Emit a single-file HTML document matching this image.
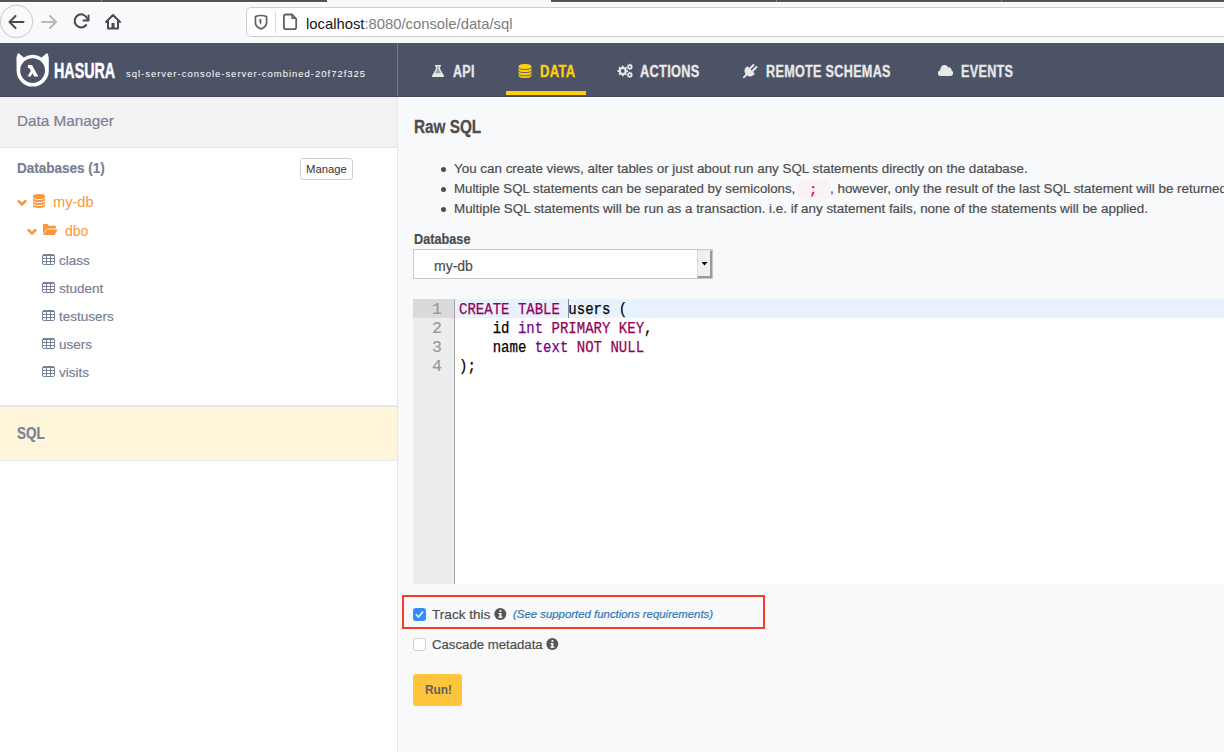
<!DOCTYPE html>
<html><head><meta charset="utf-8">
<style>
*{margin:0;padding:0;box-sizing:border-box}
html,body{width:1224px;height:752px;overflow:hidden;background:#f8f9fb;font-family:"Liberation Sans",sans-serif}
.a{position:absolute;white-space:nowrap}
.sx{transform-origin:0 0}
#tabs{left:0;top:0;width:1224px;height:2px;background:#5c4f55}
#tabgap{left:327px;top:0;width:224px;height:3px;background:#f9f9fb}
#toolbar{left:0;top:2px;width:1224px;height:41px;background:#f9f9fb;border-top:1px solid #fff}
#url{left:246px;top:7px;width:990px;height:30px;background:#fff;border:1px solid #cfcfd2;border-radius:5px}
#urltext{left:306px;top:15px;font-size:14.8px;color:#15141a;line-height:18px}
#urltext span{color:#7c7c7f}
#hdr{left:0;top:43px;width:1224px;height:54px;background:#4c5366;border-bottom:1px solid #424859}
#hsep{left:397px;top:43px;width:1px;height:53px;background:#737a8e}
.nav{top:62.5px;font-size:16px;font-weight:bold;color:#e8e8e8;-webkit-text-stroke:0.35px currentColor;letter-spacing:0.4px;line-height:18px;transform-origin:0 0}
#side{left:0;top:97px;width:398px;height:655px;background:#fff;border-right:1px solid #e6e6e6}
#dm{left:0;top:97px;width:397px;height:51px;background:#f2f2f2;border-bottom:1px solid #e3e3e3}
.st{color:#788095;-webkit-text-stroke:0.2px #788095}
.org{font-size:14px;color:#fd9539;line-height:18px}
.tbl{font-size:13.5px;color:#788095;line-height:18px;-webkit-text-stroke:0.2px #788095}
#sqlbox{left:0;top:405px;width:397px;height:56px;background:#fef5db;border-top:2px solid #e5e5e5;border-bottom:1px solid #e8e8e8}
.main{color:#4d4d4d;-webkit-text-stroke:0.2px #4d4d4d}
.bl{font-size:13.4px;line-height:16px}
.code{font-family:"Liberation Mono",monospace;font-size:12.6px;color:#c7254e;background:#f9f2f4;border-radius:4px;padding:2px 4px}
.gut{left:413px;width:29px;text-align:right;font-family:"Liberation Mono",monospace;font-size:16.5px;line-height:19px;color:#999;padding-top:1px;-webkit-text-stroke:0.2px #999}
.cd{left:459px;font-family:"Liberation Mono",monospace;font-size:16px;line-height:19px;color:#000;white-space:pre;transform-origin:0 0;transform:scaleX(0.876);padding-top:2px;-webkit-text-stroke:0.25px currentColor}
.cd b{font-weight:normal;color:#950055;-webkit-text-stroke:0.25px #950055}
.cd i{font-style:normal;color:#770088;-webkit-text-stroke:0.25px #770088}
.ck{font-size:13.6px;line-height:16px}
</style></head><body>
<div class="a" id="tabs"></div>
<div class="a" id="toolbar"></div>
<div class="a" id="tabgap"></div>
<div class="a" style="left:101px;top:0;width:1px;height:2px;background:#8d8287"></div>
<div class="a" style="left:776px;top:0;width:1px;height:2px;background:#8d8287"></div>
<div class="a" style="left:1001px;top:0;width:1px;height:2px;background:#8d8287"></div>
<!-- nav buttons -->
<svg class="a" style="left:0;top:0" width="240" height="43" viewBox="0 0 240 43">
  <circle cx="16.5" cy="21.5" r="16.3" fill="none" stroke="#c8c8c8" stroke-width="1"/>
  <path d="M23.5 22H9.5M15.5 16L9.5 22L15.5 28" fill="none" stroke="#4a4a4f" stroke-width="2" stroke-linecap="round" stroke-linejoin="round"/>
  <path d="M42 22H56M50 16L56 22L50 28" fill="none" stroke="#b9b9bc" stroke-width="2" stroke-linecap="round" stroke-linejoin="round"/>
  <path d="M87.5 19.5A6.5 6.5 0 1 0 86.2 25" fill="none" stroke="#4a4a4f" stroke-width="2" stroke-linecap="round"/>
  <path d="M88.5 15.5V20.5H83.5" fill="none" stroke="#4a4a4f" stroke-width="2" stroke-linecap="round" stroke-linejoin="round"/>
  <path d="M106 22L113 15L120 22M108 20.5V28.5H118V20.5" fill="none" stroke="#4a4a4f" stroke-width="2" stroke-linecap="round" stroke-linejoin="round"/>
  <rect x="111.5" y="23" width="3" height="5" fill="#4a4a4f"/>
</svg>
<div class="a" id="url"></div>
<svg class="a" style="left:250px;top:10px" width="60" height="26" viewBox="250 10 60 26">
  <path d="M261 15.5C263 15.5 265 15.9 266.6 16.6V22.5C266.6 25.8 264.2 27.8 261 28.9C257.8 27.8 255.4 25.8 255.4 22.5V16.6C257 15.9 259 15.5 261 15.5Z" fill="none" stroke="#606162" stroke-width="1.7" stroke-linejoin="round"/>
  <path d="M259.3 19.2L261.3 18.8V24.8C260.5 24.2 259.8 23.3 259.5 22.2Z" fill="#606162"/>
  <rect x="275" y="11" width="1" height="22" fill="#dcdcdc"/>
  <path d="M285.8 14.5H292L296.2 18.8V27.3A1.9 1.9 0 0 1 294.3 29.2H285.8A1.9 1.9 0 0 1 283.9 27.3V16.4A1.9 1.9 0 0 1 285.8 14.5Z" fill="none" stroke="#606162" stroke-width="1.8" stroke-linejoin="round"/>
  <path d="M292 14.8V18.3H295.9" fill="none" stroke="#606162" stroke-width="1.5" stroke-linejoin="round"/>
</svg>
<div class="a" id="urltext">localhost<span>:8080/console/data/sql</span></div>

<!-- hasura header -->
<div class="a" id="hdr"></div>
<div class="a" id="hsep"></div>
<svg class="a" style="left:0;top:43px" width="1224" height="53" viewBox="0 43 1224 53">
  <path d="M16.6 70.5L16.5 60C16.4 57 17 54.5 18.3 53L23.8 57.5A16.4 16.4 0 0 1 41.6 57.5L47 53C48.3 54.5 48.9 57 48.8 60L48.8 70.5A16.1 16.1 0 0 1 16.6 70.5Z" fill="#fff"/>
  <circle cx="32.6" cy="70.6" r="12.4" fill="#4c5366"/>
  <path d="M27.9 65H32L38.3 76.4H34.2L32.5 73.2L30.7 76.4H27.6L30.9 70.6L29.9 68.9C29.5 68.2 29 68 28.4 68H27.9Z" fill="#fff"/>
  <!-- flask -->
  <path d="M435 65H441V66.3H440.2V69.3L444 75.8C444.3 76.4 444 77 443.3 77H432.7C432 77 431.7 76.4 432 75.8L435.8 69.3V66.3H435Z" fill="#e8e8e8"/>
  <path d="M437.2 66.3V69.6L435 73.2H441L438.8 69.6V66.3Z" fill="#9da1ad"/>
  <!-- db yellow -->
  <path d="M518.6 66.3C518.6 63.3 531.4 63.3 531.4 66.3V75.8C531.4 78.8 518.6 78.8 518.6 75.8Z" fill="#fecf0e"/>
  <g fill="none" stroke="#4c5366" stroke-width="0.9">
    <path d="M518.4 67.6C520 70.2 530 70.2 531.6 67.6"/>
    <path d="M518.4 70.8C520 73.3 530 73.3 531.6 70.8"/>
    <path d="M518.4 73.9C520 76.4 530 76.4 531.6 73.9"/>
  </g>
  <!-- gears -->
  <g fill="#e8e8e8">
    <circle cx="622.7" cy="71" r="3.9"/>
    <g stroke="#e8e8e8" stroke-width="1.9">
      <path d="M622.7 65.8V76.2M617.5 71H627.9M619 67.3L626.4 74.7M626.4 67.3L619 74.7"/>
    </g>
    <circle cx="629.8" cy="66.9" r="2.3"/>
    <path d="M629.8 63.8V70M626.7 66.9H632.9M627.6 64.7L632 69.1M632 64.7L627.6 69.1" stroke="#e8e8e8" stroke-width="1.2"/>
    <circle cx="629.8" cy="74.9" r="2.3"/>
    <path d="M629.8 71.8V78M626.7 74.9H632.9M627.6 72.7L632 77.1M632 72.7L627.6 77.1" stroke="#e8e8e8" stroke-width="1.2"/>
  </g>
  <circle cx="622.7" cy="71" r="1.9" fill="#4c5366"/>
  <circle cx="629.8" cy="66.9" r="0.9" fill="#4c5366"/>
  <circle cx="629.8" cy="74.9" r="0.9" fill="#4c5366"/>
  <!-- plug -->
  <g fill="#e8e8e8" stroke="#e8e8e8">
    <path d="M747.5 66.5L754.5 73.5C753 76.5 749.5 77 747 75L745.8 73.8C744 71.5 744.5 68 747.5 66.5Z" stroke-width="0.5"/>
    <path d="M743.8 77.3L747 74" stroke-width="1.8" stroke-linecap="round"/>
    <path d="M750 68.5L753.5 65M752.5 71L756.5 67" stroke-width="2" stroke-linecap="round"/>
  </g>
  <!-- cloud -->
  <path d="M940.5 76C938.8 76 937.9 74.7 937.9 73.2C937.9 71.5 939 70.4 940.2 70.2C940.2 67 942 65 944.6 65C946.4 65 947.6 66 948.3 67.3C950.3 67 951.7 68.6 951.6 70.5C952.6 71 953.1 72 953.1 73.3C953.1 74.9 952 76 950.4 76Z" fill="#e8e8e8"/>
</svg>
<div class="a sx" style="left:54px;top:59px;font-size:22.5px;font-weight:bold;color:#fff;line-height:24px;transform:scaleX(0.635);-webkit-text-stroke:0.5px #fff">HASURA</div>
<div class="a" style="left:126px;top:66.5px;font-size:9.5px;color:#fff;letter-spacing:0.98px;line-height:14px">sql-server-console-server-combined-20f72f325</div>

<div class="a nav" style="left:453px;transform:scaleX(0.778)">API</div>
<div class="a nav" style="left:540px;color:#fecf0e;transform:scaleX(0.816)">DATA</div>
<div class="a" style="left:506px;top:91px;width:80px;height:4px;background:#fecf0e"></div>
<div class="a nav" style="left:640px;transform:scaleX(0.797)">ACTIONS</div>
<div class="a nav" style="left:766px;transform:scaleX(0.7875)">REMOTE SCHEMAS</div>
<div class="a nav" style="left:961px;transform:scaleX(0.7875)">EVENTS</div>
<div class="a" style="left:0;top:97px;width:1224px;height:1px;background:#fff"></div>

<!-- sidebar -->
<div class="a" id="side"></div>
<div class="a" id="dm"></div>
<div class="a st" style="left:17px;top:112px;font-size:15.3px;line-height:18px">Data Manager</div>
<div class="a st sx" style="left:17px;top:159px;font-size:15px;font-weight:bold;line-height:18px;transform:scaleX(0.9)">Databases (1)</div>
<div class="a" style="left:300px;top:158px;width:53px;height:22px;border:1px solid #cdcdcd;border-radius:3px;background:#fff"></div>
<div class="a" style="left:306px;top:162px;font-size:11.3px;color:#333;line-height:14px">Manage</div>

<svg class="a" style="left:0;top:190px" width="120" height="190" viewBox="0 190 120 190">
  <g fill="none" stroke="#fd9539" stroke-width="2.6" stroke-linecap="square" stroke-linejoin="miter">
    <path d="M18.8 201.3L22 204.5L25.2 201.3"/>
    <path d="M28.8 230.3L32 233.5L35.2 230.3"/>
  </g>
  <g fill="#fd9539">
    <path d="M33 196.2C33 193.3 45 193.3 45 196.2V205.8C45 208.7 33 208.7 33 205.8Z"/>
    <path d="M43 225.2C43 224.5 43.5 224 44.2 224H47.5L49 225.8H54.8C55.5 225.8 56 226.3 56 227V228.5H48.8C47.5 228.5 46.8 229 46.2 229.8L43 234.5Z"/>
    <path d="M47 229.5H57.8L54.5 235H43.2Z"/>
  </g>
  <g fill="none" stroke="#fff" stroke-width="0.9">
    <path d="M32.8 197.6C34.5 200.2 43.5 200.2 45.2 197.6"/>
    <path d="M32.8 200.7C34.5 203.2 43.5 203.2 45.2 200.7"/>
    <path d="M32.8 203.7C34.5 206.2 43.5 206.2 45.2 203.7"/>
  </g>
  <g id="ti" fill="none" stroke="#75809a" stroke-width="1">
    <rect x="42.5" y="254.5" width="12" height="10" rx="1.5"/>
    <path d="M43 255.5H54" stroke-width="1"/>
    <path d="M43 258.5H54M43 261.5H54M46.5 255V264M50.5 255V264"/>
  </g>
  <use href="#ti" y="28"/>
  <use href="#ti" y="56"/>
  <use href="#ti" y="84"/>
  <use href="#ti" y="112"/>
</svg>
<div class="a org" style="left:53px;top:193px;font-size:14.6px">my-db</div>
<div class="a org" style="left:65px;top:222px">dbo</div>

<div class="a tbl" style="left:59px;top:252px">class</div>
<div class="a tbl" style="left:59px;top:280px">student</div>
<div class="a tbl" style="left:59px;top:308px">testusers</div>
<div class="a tbl" style="left:59px;top:336px">users</div>
<div class="a tbl" style="left:59px;top:364px">visits</div>

<div class="a" id="sqlbox"></div>
<div class="a st sx" style="left:17px;top:425px;font-size:16px;font-weight:bold;line-height:18px;transform:scaleX(0.84)">SQL</div>

<!-- main -->
<div class="a main sx" style="left:414px;top:117px;font-size:18px;font-weight:bold;line-height:20px;transform:scaleX(0.85);-webkit-text-stroke:0.3px #4d4d4d">Raw SQL</div>

<!-- bullets -->
<div class="a" style="left:441px;top:167px;width:5px;height:5px;border-radius:50%;background:#4d4d4d"></div>
<div class="a" style="left:441px;top:187px;width:5px;height:5px;border-radius:50%;background:#4d4d4d"></div>
<div class="a" style="left:441px;top:207px;width:5px;height:5px;border-radius:50%;background:#4d4d4d"></div>
<div class="a main bl" style="left:454px;top:161px">You can create views, alter tables or just about run any SQL statements directly on the database.</div>
<div class="a main bl" style="left:454px;top:181px;font-size:13.25px">Multiple SQL statements can be separated by semicolons,</div>
<div class="a" style="left:798px;top:180px;width:32px;height:19px;background:#f9f2f4;border-radius:4px"></div>
<div class="a" style="left:809px;top:182px;font-family:'Liberation Mono',monospace;font-size:14px;font-weight:bold;line-height:16px;color:#d6134f">;</div>
<div class="a main bl" style="left:830px;top:181px">, however, only the result of the last SQL statement will be returned.</div>
<div class="a main bl" style="left:454px;top:201px">Multiple SQL statements will be run as a transaction. i.e. if any statement fails, none of the statements will be applied.</div>

<div class="a main sx" style="left:414px;top:231px;font-size:14.6px;font-weight:bold;line-height:16px;transform:scaleX(0.87)">Database</div>
<div class="a" style="left:413px;top:249px;width:300px;height:30px;background:#fff;border:1px solid #c8c8c8"></div>
<div class="a main" style="left:434px;top:258px;font-size:14px;line-height:16px">my-db</div>
<div class="a" style="left:697px;top:250px;width:15px;height:28px;background:#f0f0f0;border-left:1px solid #d9d9d9;border-right:2px solid #9a9a9a;border-bottom:2px solid #9a9a9a;border-top:1px solid #e8e8e8"></div>
<svg class="a" style="left:701px;top:261px" width="8" height="6"><path d="M0.5 1H6.5L3.5 4.5Z" fill="#000"/></svg>

<!-- editor -->
<div class="a" style="left:413px;top:299px;width:811px;height:285px;background:#fff"></div>
<div class="a" style="left:413px;top:299px;width:42px;height:285px;background:#ededed;border-right:1px solid #a5a5a5"></div>
<div class="a" style="left:413px;top:299px;width:41px;height:19px;background:#dadada"></div>
<div class="a" style="left:455px;top:299px;width:769px;height:19px;background:#e8f2ff"></div>
<div class="a" style="left:568px;top:299px;width:1px;height:19px;background:#8a8a8a"></div>
<div class="a gut" style="top:299px">1</div>
<div class="a gut" style="top:318px">2</div>
<div class="a gut" style="top:337px">3</div>
<div class="a gut" style="top:356px">4</div>
<div class="a cd" style="top:299px"><b>CREATE TABLE</b> users (</div>
<div class="a cd" style="top:318px">    id <i>int</i> <b>PRIMARY KEY</b>,</div>
<div class="a cd" style="top:337px">    name <i>text</i> <b>NOT NULL</b></div>
<div class="a cd" style="top:356px">);</div>

<!-- checkboxes -->
<div class="a" style="left:402px;top:595px;width:363px;height:34px;border:2px solid #fb3b1f"></div>
<div class="a" style="left:413px;top:608px;width:13px;height:13px;border-radius:3px;background:#2f8ef7"></div>
<svg class="a" style="left:413px;top:608px" width="13" height="13"><path d="M3.2 6.8L5.4 9L9.8 4" fill="none" stroke="#fff" stroke-width="1.5" stroke-linecap="round" stroke-linejoin="round"/></svg>
<div class="a main ck" style="left:432px;top:607px">Track this</div>
<svg class="a" style="left:494px;top:608px" width="13" height="13" viewBox="0 0 13 13"><circle cx="6.3" cy="6" r="6" fill="#555"/><rect x="5.4" y="5" width="2" height="4.5" fill="#fff"/><rect x="4.4" y="8.6" width="4" height="1.2" fill="#fff"/><rect x="4.4" y="5" width="2" height="1.1" fill="#fff"/><circle cx="6.4" cy="3" r="1.1" fill="#fff"/></svg>
<div class="a" style="left:513px;top:607px;font-size:11.4px;font-style:italic;color:#2f78b5;line-height:14px;-webkit-text-stroke:0.2px #2f78b5">(See supported functions requirements)</div>

<div class="a" style="left:413px;top:638px;width:13px;height:13px;border-radius:3px;background:#fff;border:1.5px solid #cfcfcf"></div>
<div class="a main ck" style="left:432px;top:637px;font-size:13.2px">Cascade metadata</div>
<svg class="a" style="left:546px;top:638px" width="13" height="13" viewBox="0 0 13 13"><circle cx="6.3" cy="6" r="6" fill="#555"/><rect x="5.4" y="5" width="2" height="4.5" fill="#fff"/><rect x="4.4" y="8.6" width="4" height="1.2" fill="#fff"/><rect x="4.4" y="5" width="2" height="1.1" fill="#fff"/><circle cx="6.4" cy="3" r="1.1" fill="#fff"/></svg>

<div class="a" style="left:413px;top:674px;width:49px;height:32px;background:#fec53d;border-radius:3px"></div>
<div class="a sx" style="left:425px;top:683px;font-size:12.5px;font-weight:bold;color:#606060;line-height:14px;transform:scaleX(0.95)">Run!</div>
</body></html>
